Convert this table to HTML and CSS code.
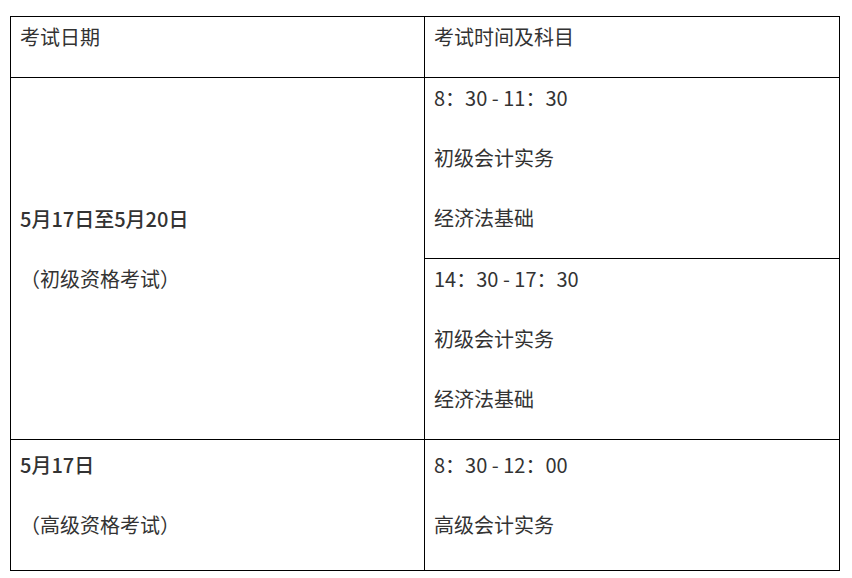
FILE: index.html
```html
<!DOCTYPE html>
<html lang="zh-CN">
<head>
<meta charset="utf-8">
<title>考试时间</title>
<link rel="stylesheet" href="styles.css">
</head>
<body>
<div class="wrap">
<table class="exam">
  <colgroup><col class="c1"><col class="c2"></colgroup>
  <tr class="head">
    <td><p>考试日期</p></td>
    <td><p>考试时间及科目</p></td>
  </tr>
  <tr class="r1">
    <td rowspan="2" class="mid"><p><strong>5月17日至5月20日</strong></p><p>（初级资格考试）</p></td>
    <td><p>8：30 - 11：30</p><p>初级会计实务</p><p>经济法基础</p></td>
  </tr>
  <tr class="r1">
    <td><p>14：30 - 17：30</p><p>初级会计实务</p><p>经济法基础</p></td>
  </tr>
  <tr class="r3">
    <td class="mid"><p><strong>5月17日</strong></p><p>（高级资格考试）</p></td>
    <td class="mid"><p>8：30 - 12：00</p><p>高级会计实务</p></td>
  </tr>
</table>
</div>
</body>
</html>
```

FILE: styles.css
```css
html, body {
  margin: 0;
  padding: 0;
  background: #fff;
}
.wrap {
  padding: 16px 0 0 10px;
}
.exam {
  border-collapse: collapse;
  width: 829px;
  table-layout: fixed;
  font-family: "Noto Sans CJK SC", "Microsoft YaHei", sans-serif;
  font-size: 20px;
  color: #333;
}
.c1 { width: 414px; }
.c2 { width: 415px; }
.exam td {
  border: 1px solid #000;
  padding: 0 9px;
  vertical-align: top;
}
.exam td.mid {
  vertical-align: middle;
}
.exam p {
  margin: 0 0 20px;
  line-height: 40px;
  white-space: nowrap;
}
.exam strong {
  font-weight: 500;
}
.r3 td {
  height: 130px;
}
```
